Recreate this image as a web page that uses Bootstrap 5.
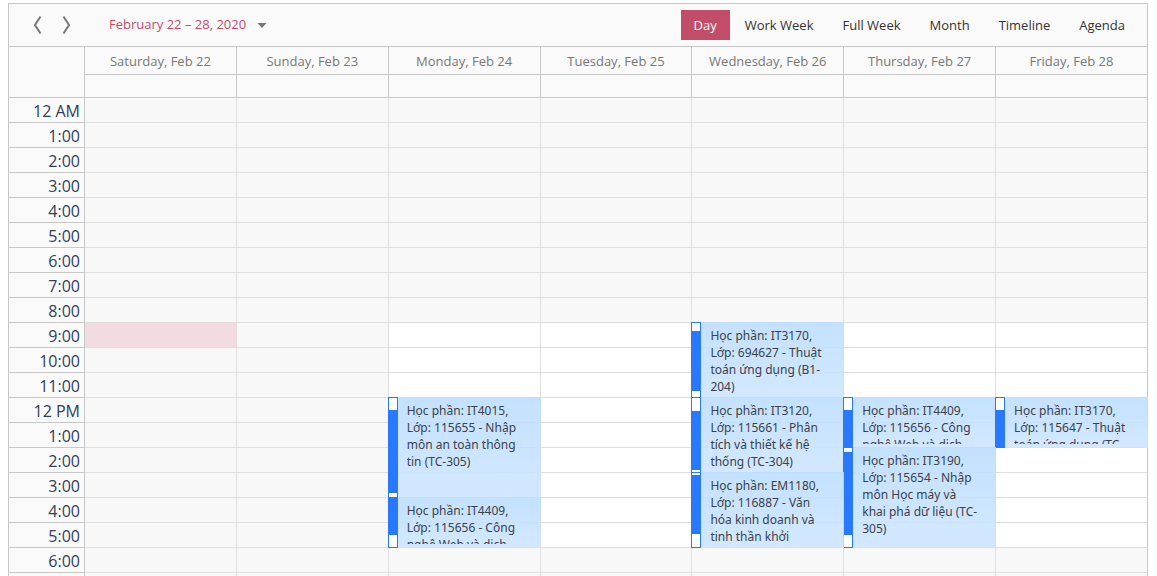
<!DOCTYPE html>
<html lang="en">
<head>
<meta charset="utf-8">
<meta name="viewport" content="width=device-width, initial-scale=1">
<title>Schedule</title>
<link href="https://cdn.jsdelivr.net/npm/bootstrap@5.3.0/dist/css/bootstrap.min.css" rel="stylesheet">
<style>
  body { font-family: "Open Sans", "Noto Sans", sans-serif; font-size: 13px; background: #fff; }
  .page { padding: 3px 9px 0 8px; }
  .scheduler { border: solid #c8c8c8; border-width: 1px 0 0 1px; background: #fafafa; }
  .toolbar { height: 42px; padding: 0 8px 0 23px; border-right: 1px solid #c8c8c8; }
  .arrow { width: 10px; height: 20px; color: #777; }
  .arrow + .arrow { margin-left: 20px; }
  .range { color: #c14d69; font-size: 13px; margin-left: 37px; gap: 11px; }
  .views { gap: 1px; }
  .view { --bs-btn-padding-x: 14px; --bs-btn-padding-y: 5px; --bs-btn-font-size: 13px; --bs-btn-line-height: 20px;
          --bs-btn-color: #333; --bs-btn-border-width: 0; --bs-btn-active-bg: #c14d69; --bs-btn-active-color: #fff; }
  .view.active { padding-left: 13px; padding-right: 13px; }
  .planner { table-layout: fixed; border-collapse: separate; border-spacing: 0; width: 100%; }
  .planner .hours { width: 76px; }
  .planner th, .planner td { height: 25px; padding: 0; font-weight: 400; border: solid #c8c8c8; border-width: 0 1px 1px 0; }
  .planner thead th { border-width: 1px 1px 0 0; color: #787878; text-align: center; height: 28px; line-height: 25px; padding-top: 2px; }
  .planner thead .corner { border-bottom-width: 1px; }
  .planner .allday td { height: 24px; border-top-width: 1px; }
  .planner tbody th { font-size: 16px; line-height: 21px; color: #2f405c; text-align: right; padding: 3px 4px 0 0; }
  .planner .slot { position: relative; background: #f8f8f8; border-color: #dedede; }
  .planner .slot:last-child { border-right-color: #c8c8c8; }
  .planner .work { background: #fff; }
  .planner .now { background: #f2dce1; border-color: #ebd6db; }
  .appt { position: absolute; z-index: 1; top: -1px; left: -1px; right: -1px; padding: 5px 0 4px 19px;
          background: linear-gradient(rgba(187, 221, 255, .88), rgba(205, 229, 255, .88)); color: #3c4248; }
  .appt p { font: 12px/17px "Noto Sans", "Open Sans", sans-serif; height: 100%; margin: 0; overflow: hidden; white-space: nowrap; }
  .status { position: absolute; inset: 0 auto 0 0; width: 10px; border: 1px solid #2979ff; background: #fff; }
  .busy { background: #2979ff; }
</style>
</head>
<body>
<main class="page vh-100 overflow-hidden">
  <div class="scheduler">
    <div class="toolbar d-flex align-items-center">
      <button type="button" class="arrow btn p-0 border-0 d-flex" aria-label="Previous">
        <svg width="10" height="20" viewBox="0 0 10 20" fill="none" stroke="currentColor" stroke-width="2"><path d="M8.500 1.500 3 10l5.500 8.500"/></svg>
      </button>
      <button type="button" class="arrow btn p-0 border-0 d-flex" aria-label="Next">
        <svg width="10" height="20" viewBox="0 0 10 20" fill="none" stroke="currentColor" stroke-width="2"><path d="M1.500 1.500 7 10l-5.500 8.500"/></svg>
      </button>
      <button type="button" class="range btn p-0 border-0 d-flex align-items-center">February 22 – 28, 2020
        <svg width="10" height="5" viewBox="0 0 10 5" fill="#777"><path d="M0.500 0h9L5 5z"/></svg>
      </button>
      <div class="views d-flex ms-auto" role="group" aria-label="View">
        <button type="button" class="view btn rounded-0 active">Day</button>
        <button type="button" class="view btn rounded-0">Work Week</button>
        <button type="button" class="view btn rounded-0">Full Week</button>
        <button type="button" class="view btn rounded-0">Month</button>
        <button type="button" class="view btn rounded-0">Timeline</button>
        <button type="button" class="view btn rounded-0">Agenda</button>
      </div>
    </div>
    <table class="planner">
      <colgroup><col class="hours"><col span="7"></colgroup>
      <thead>
        <tr>
          <th rowspan="2" class="corner"></th>
          <th>Saturday, Feb 22</th><th>Sunday, Feb 23</th><th>Monday, Feb 24</th><th>Tuesday, Feb 25</th>
          <th>Wednesday, Feb 26</th><th>Thursday, Feb 27</th><th>Friday, Feb 28</th>
        </tr>
        <tr class="allday"><td></td><td></td><td></td><td></td><td></td><td></td><td></td></tr>
      </thead>
      <tbody id="slots"></tbody>
    </table>
  </div>
</main>
<script src="https://cdn.jsdelivr.net/npm/bootstrap@5.3.0/dist/js/bootstrap.bundle.min.js"></script>
<script>
  const HOUR = 25;
  // day: column index, start: hour, hours: length, busy: free pixels before and after the busy part
  const appointments = [
    { day: 2, start: 12, hours: 4, busy: [12, 4], lines: ['Học phần: IT4015,', 'Lớp: 115655 - Nhập', 'môn an toàn thông', 'tin (TC-305)'] },
    { day: 2, start: 16, hours: 2, busy: [0, 12], lines: ['Học phần: IT4409,', 'Lớp: 115656 - Công', 'nghệ Web và dịch'] },
    { day: 4, start: 9, hours: 3, busy: [8, 6], lines: ['Học phần: IT3170,', 'Lớp: 694627 - Thuật', 'toán ứng dụng (B1-', '204)'] },
    { day: 4, start: 12, hours: 3, busy: [13, 2], lines: ['Học phần: IT3120,', 'Lớp: 115661 - Phân', 'tích và thiết kế hệ', 'thống (TC-304)'] },
    { day: 4, start: 15, hours: 3, busy: [2, 13], lines: ['Học phần: EM1180,', 'Lớp: 116887 - Văn', 'hóa kinh doanh và', 'tinh thần khởi'] },
    { day: 5, start: 12, hours: 2, busy: [12, 0], lines: ['Học phần: IT4409,', 'Lớp: 115656 - Công', 'nghệ Web và dịch'] },
    { day: 5, start: 14, hours: 4, busy: [4, 12], lines: ['Học phần: IT3190,', 'Lớp: 115654 - Nhập', 'môn Học máy và', 'khai phá dữ liệu (TC-', '305)'] },
    { day: 6, start: 12, hours: 2, busy: [12, 0], lines: ['Học phần: IT3170,', 'Lớp: 115647 - Thuật', 'toán ứng dụng (TC-'] }
  ];

  const label = h => h === 0 ? '12 AM' : h === 12 ? '12 PM' : (h % 12) + ':00';

  function appointmentHtml(a) {
    const height = a.hours * HOUR + 1;
    const fill = height - 2 - a.busy[0] - a.busy[1];
    return `<div class="appt" style="height:${height}px">
      <div class="status"><div class="busy" style="height:${fill}px;margin-top:${a.busy[0]}px"></div></div>
      <p>${a.lines.join('<br>')}</p></div>`;
  }

  let rows = '';
  for (let h = 0; h < 24; h++) {
    rows += `<tr><th scope="row">${label(h)}</th>`;
    for (let day = 0; day < 7; day++) {
      const work = day > 1 && h >= 9 && h < 18 ? ' work' : '';
      const now = day === 0 && h === 9 ? ' now' : '';
      rows += `<td class="slot${work}${now}">` +
        appointments.filter(a => a.day === day && a.start === h).map(appointmentHtml).join('') + '</td>';
    }
    rows += '</tr>';
  }
  document.getElementById('slots').innerHTML = rows;
</script>
</body>
</html>
